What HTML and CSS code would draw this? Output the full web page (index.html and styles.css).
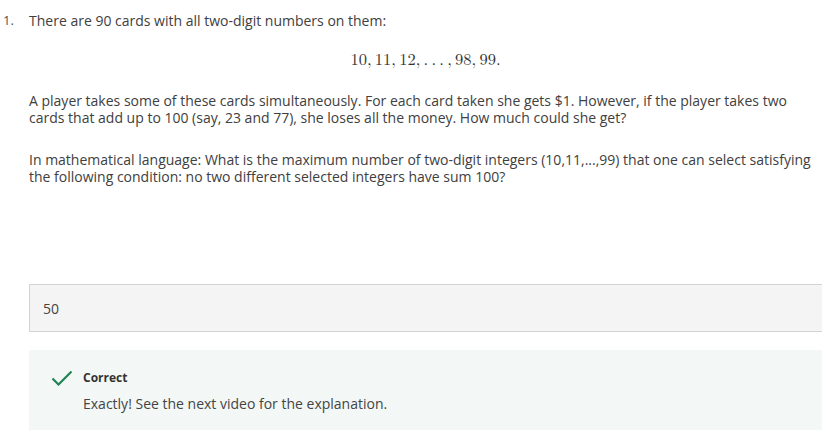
FILE: index.html
```html
<!DOCTYPE html>
<html>
<head>
<meta charset="utf-8">
<link rel="stylesheet" href="styles.css">
</head>
<body>
<div class="question">
  <div class="num">1.</div>
  <div class="content">
    <p class="lead">There are 90 cards with all two-digit numbers on them:</p>
    <div class="math">10,&thinsp;11,&thinsp;12,&thinsp;.&thinsp;.&thinsp;.&thinsp;,&thinsp;98,&thinsp;99.</div>
    <p class="para">A player takes some of these cards simultaneously. For each card taken she gets $1. However, if the player takes two cards that add up to 100 (say, 23 and 77), she loses all the money. How much could she get?</p>
    <p class="para para2">In mathematical language: What is the maximum number of two-digit integers (10,11,...,99) that one can select satisfying the following condition: no two different selected integers have sum 100?</p>
    <div class="answer">50</div>
    <div class="feedback">
      <svg class="check" width="22" height="16" viewBox="0 0 22 16"><path d="M1.5 8.5 L7.5 14.5 L20.5 1.5" fill="none" stroke="#1f8354" stroke-width="2.2"/></svg>
      <div class="fb-text">
        <div class="fb-title">Correct</div>
        <div class="fb-msg">Exactly! See the next video for the explanation.</div>
      </div>
    </div>
  </div>
</div>
</body>
</html>
```

FILE: styles.css
```css
html, body {
  margin: 0;
  padding: 0;
  background: #fff;
}
body {
  font-family: "Open Sans", "Liberation Sans", sans-serif;
  font-size: 14px;
  color: #404040;
  overflow: hidden;
}
.question {
  display: flex;
  padding-top: 12px;
}
.num {
  width: 29px;
  padding-left: 3px;
  box-sizing: border-box;
  line-height: 17px;
  font-size: 13px;
  color: #555;
}
.content {
  flex: 1;
  min-width: 0;
}
.lead {
  margin: 0;
  line-height: 17px;
}
.math {
  font-family: "Latin Modern Math", "Liberation Serif", "DejaVu Serif", serif;
  font-size: 16.5px;
  text-align: center;
  margin-top: 21px;
  line-height: 20px;
  color: #333;
}
.para {
  margin: 0;
  margin-top: 22px;
  line-height: 17px;
}
.para2 {
  margin-top: 25px;
}
.answer {
  margin-top: 99px;
  height: 46px;
  background: #f4f4f4;
  border: 1px solid #d3d3d3;
  border-right: none;
  padding-left: 13px;
  display: flex;
  align-items: center;
  color: #444;
}
.feedback {
  margin-top: 18px;
  height: 80px;
  background: #f3f8f6;
  display: flex;
  align-items: flex-start;
  padding: 20px 0 0 22px;
  box-sizing: border-box;
}
.check {
  flex: none;
}
.fb-text {
  margin-left: 10px;
}
.fb-title {
  font-size: 12px;
  font-weight: 700;
  line-height: 16px;
  color: #333;
}
.fb-msg {
  margin-top: 9px;
  line-height: 18px;
  color: #444;
}
```
